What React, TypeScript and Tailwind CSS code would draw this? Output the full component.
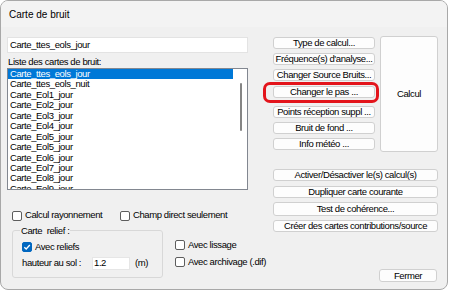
import React from 'react';

const items = [
  'Carte_ttes_eols_jour',
  'Carte_ttes_eols_nuit',
  'Carte_Eol1_jour',
  'Carte_Eol2_jour',
  'Carte_Eol3_jour',
  'Carte_Eol4_jour',
  'Carte_Eol5_jour',
  'Carte_Eol5_jour',
  'Carte_Eol6_jour',
  'Carte_Eol7_jour',
  'Carte_Eol8_jour',
  'Carte_Eol9_jour',
];

function Check({ checked = false }: { checked?: boolean }) {
  return (
    <span
      className={`flex h-[10px] w-[10px] shrink-0 items-center justify-center rounded-[2px] border ${
        checked ? 'border-[#0067c0] bg-[#0067c0]' : 'border-[#5d5d5d] bg-white'
      }`}
    >
      {checked && (
        <svg width="8" height="8" viewBox="0 0 8 8">
          <path d="M1.3 4.2 L3.2 6 L6.8 2" fill="none" stroke="white" strokeWidth="1.3" />
        </svg>
      )}
    </span>
  );
}

function Btn({ children, className = '' }: { children: React.ReactNode; className?: string }) {
  return (
    <button
      className={`flex items-center justify-center whitespace-nowrap rounded-[3px] border border-[#d0d0d0] bg-[#fdfdfd] leading-none text-black ${className}`}
    >
      {children}
    </button>
  );
}

export default function App() {
  return (
    <div className="h-[292px] w-[450px] overflow-hidden bg-white font-['Liberation_Sans',Arial,sans-serif] text-black">
      <div className="flex h-[290px] w-[448px] flex-col overflow-hidden rounded-[8px] border border-[#a8a8a8] bg-[#f0f0f0]">
        {/* Title bar */}
        <div className="flex h-[26px] shrink-0 items-center bg-[#f3f3f3] pl-[8px] text-[10px]">Carte de bruit</div>

        <div className="flex flex-1 whitespace-nowrap pl-[6px] text-[9.5px] tracking-[-0.4px]">
          {/* Left column */}
          <div className="flex w-[241px] flex-col pt-[10px]">
            <div className="flex h-[16px] items-center border border-[#e3e3e3] bg-white pl-[2px]">Carte_ttes_eols_jour</div>
            <div className="mt-[2px] h-[13px] pl-[1px] leading-[13px]">Liste des cartes de bruit:</div>
            <div className="relative h-[122px] overflow-hidden border border-[#828790] bg-white">
              {items.map((it, i) => (
                <div
                  key={i}
                  className={`h-[10.45px] w-[225px] pl-[2px] leading-[10.45px] ${i === 0 ? 'bg-[#0078d7] text-white' : ''}`}
                >
                  {it}
                </div>
              ))}
              <div className="absolute left-[232px] top-[14px] h-[48px] w-[2px] rounded-full bg-[#858585]" />
            </div>

            <div className="mt-[20px] flex h-[11px] items-center pl-[5px]">
              <div className="flex w-[108px] items-center gap-[3px]">
                <Check />
                <span>Calcul rayonnement</span>
              </div>
              <div className="flex items-center gap-[3px]">
                <Check />
                <span>Champ direct seulement</span>
              </div>
            </div>

            <div className="mt-[4px] flex pl-[5px]">
              <fieldset className="h-[53px] w-[151px] shrink-0 rounded-[3px] border border-[#d8d8d8]">
                <legend className="ml-[7px] px-[1px] leading-[11px]">Carte&nbsp; relief :</legend>
                <div className="mt-[6px] flex h-[10px] items-center gap-[3px] pl-[9px]">
                  <Check checked />
                  <span>Avec reliefs</span>
                </div>
                <div className="mt-[5px] flex h-[13px] items-center pl-[9px]">
                  <span className="w-[70px]">hauteur au sol :</span>
                  <div className="flex h-[13px] w-[38px] items-center border border-[#e6e6e6] bg-white pl-[1px]">1.2</div>
                  <span className="ml-[5px]">(m)</span>
                </div>
              </fieldset>
              <div className="ml-[12px] flex flex-col pt-[15px]">
                <div className="flex h-[10px] items-center gap-[3px]">
                  <Check />
                  <span>Avec lissage</span>
                </div>
                <div className="mt-[7px] flex h-[10px] items-center gap-[3px]">
                  <Check />
                  <span>Avec archivage (.dif)</span>
                </div>
              </div>
            </div>
          </div>

          {/* Right column */}
          <div className="ml-[25px] flex w-[165px] flex-col pt-[9px]">
            <div className="flex h-[116px] gap-[5px]">
              <div className="flex w-[102px] flex-col">
                <Btn className="mt-[1px] h-[12px]">Type de calcul...</Btn>
                <Btn className="mt-[4px] h-[12px]">Fréquence(s) d'analyse...</Btn>
                <Btn className="mt-[4px] h-[12px]">Changer Source Bruits...</Btn>
                <div className="relative mt-[5px] flex">
                  <Btn className="h-[12px] w-full">Changer le pas ...</Btn>
                  <span className="absolute -bottom-[5px] -left-[10px] -right-[4px] -top-[4px] rounded-[7px] border-[3px] border-[#e3141b]" />
                </div>
                <Btn className="mt-[8px] h-[12px]">Points réception suppl ...</Btn>
                <Btn className="mt-[4px] h-[12px]">Bruit de fond ...</Btn>
                <Btn className="mt-[4px] h-[12px]">Info météo ...</Btn>
              </div>
              <Btn className="h-[116px] w-[58px]">Calcul</Btn>
            </div>
            <Btn className="mt-[17px] h-[12px]">Activer/Désactiver le(s) calcul(s)</Btn>
            <Btn className="mt-[5px] h-[12px]">Dupliquer carte courante</Btn>
            <Btn className="mt-[4px] h-[14px] border-[#4d86c9]">Test de cohérence...</Btn>
            <Btn className="mt-[4px] h-[12px]">Créer des cartes contributions/source</Btn>
            <Btn className="mr-[1px] mt-[37px] h-[13px] w-[58px] self-end">Fermer</Btn>
          </div>
        </div>
      </div>
    </div>
  );
}
